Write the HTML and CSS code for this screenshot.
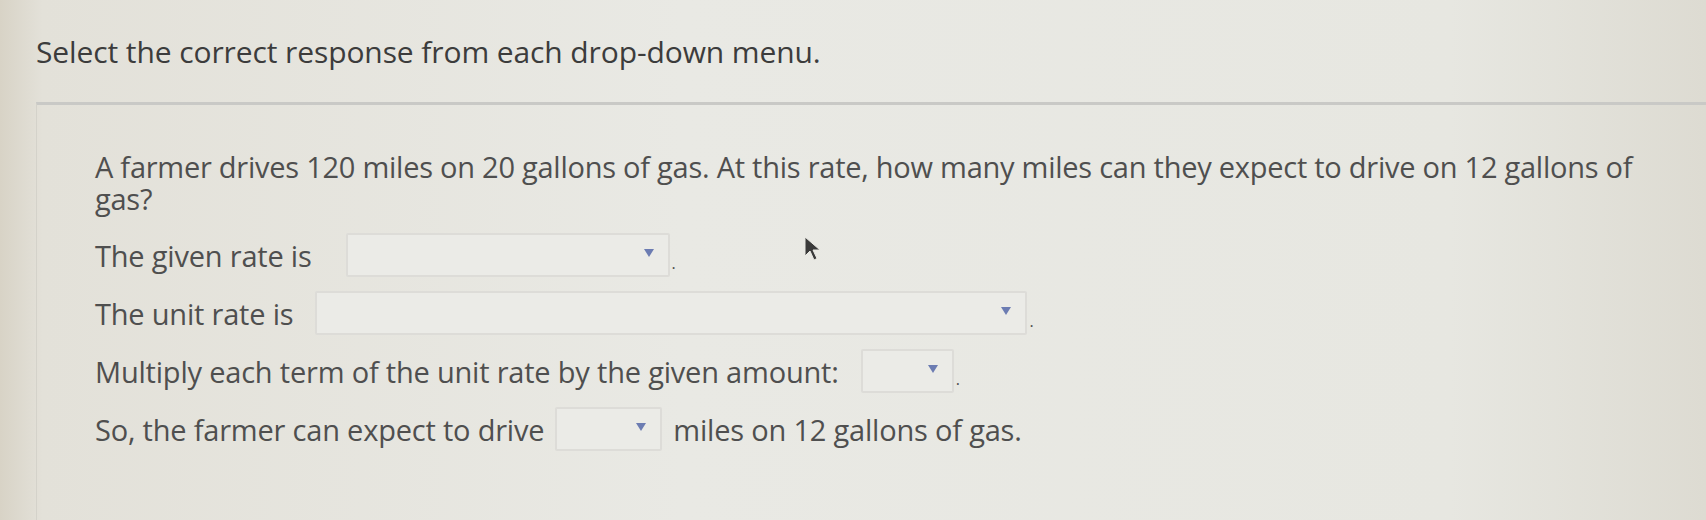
FILE: index.html
```html
<!DOCTYPE html>
<html lang="en">
<head>
    <meta charset="UTF-8">
    <title>Unit Rates</title>
    <link rel="stylesheet" href="styles.css">
</head>
<body>
    <h1 class="prompt">Select the correct response from each drop-down menu.</h1>

    <div class="question-card">
        <p class="question">A farmer drives 120 miles on 20 gallons of gas. At this rate, how many miles can they expect to drive on 12 gallons of gas?</p>

        <div class="step">
            <span>The given rate is</span>
            <span class="dropdown dd-given"><span class="arrow"></span></span>
            <span class="dot">.</span>
        </div>
        <div class="step">
            <span>The unit rate is</span>
            <span class="dropdown dd-unit"><span class="arrow"></span></span>
            <span class="dot">.</span>
        </div>
        <div class="step">
            <span>Multiply each term of the unit rate by the given amount:</span>
            <span class="dropdown dd-amount"><span class="arrow"></span></span>
            <span class="dot">.</span>
        </div>
        <div class="step">
            <span>So, the farmer can expect to drive</span>
            <span class="dropdown dd-miles"><span class="arrow"></span></span>
            <span>miles on 12 gallons of gas.</span>
        </div>

        <!-- mouse pointer -->
        <svg class="cursor" width="18" height="26" viewBox="0 0 18 26">
            <path d="M1 1 L1 20 L6 15 L10 24 L13 22.5 L9 14 L16 14 Z" fill="#3a3a3a" stroke="#e8e8e2" stroke-width="1"/>
        </svg>
    </div>
</body>
</html>
```

FILE: styles.css
```css
body {
    font-family: "Open Sans", Arial, sans-serif;
    background: linear-gradient(90deg, #d8d3c6 0%, #e3e1d9 2.5%, #e9e9e4 40%, #e7e7e1 85%, #dddbd2 100%);
    color: #4f4f4f;
    margin: 0;
    padding: 0;
    height: 520px;
    overflow: hidden;
}
.prompt {
    font-size: 30px;
    font-weight: 400;
    line-height: 40px;
    color: #3c3c3c;
    margin: 0;
    padding: 32px 0 0 36px;
    letter-spacing: -0.1px;
}
.question-card {
    position: relative;
    margin: 30px 0 0 36px;
    border-top: 3px solid #c9c9c6;
    border-left: 1px solid #d4d2ca;
    padding: 46px 0 0 58px;
    height: 380px;
}
.question {
    font-size: 29px;
    line-height: 32px;
    margin: 0 0 17px 0;
    max-width: 1580px;
    letter-spacing: -0.25px;
}
.step {
    display: flex;
    align-items: center;
    font-size: 29px;
    letter-spacing: -0.2px;
    height: 46px;
    margin-bottom: 12px;
}
.dropdown {
    position: relative;
    box-sizing: border-box;
    height: 44px;
    border: 2px solid #dddcd8;
    border-radius: 2px;
    background-color: #ebebe7;
}
.dd-given { width: 324px; margin-left: 34px; }
.dd-unit { width: 712px; margin-left: 22px; }
.dd-amount { width: 93px; margin-left: 22px; }
.dd-miles { width: 107px; margin: 0 11px; }
.arrow {
    position: absolute;
    right: 14px;
    top: 14px;
    width: 0;
    height: 0;
    border-left: 5px solid transparent;
    border-right: 5px solid transparent;
    border-top: 8px solid #6c7cb2;
}
.dot {
    align-self: flex-end;
    margin: 0 0 4px 2px;
    font-size: 16px;
}
.cursor {
    position: absolute;
    left: 767px;
    top: 131px;
}
```
